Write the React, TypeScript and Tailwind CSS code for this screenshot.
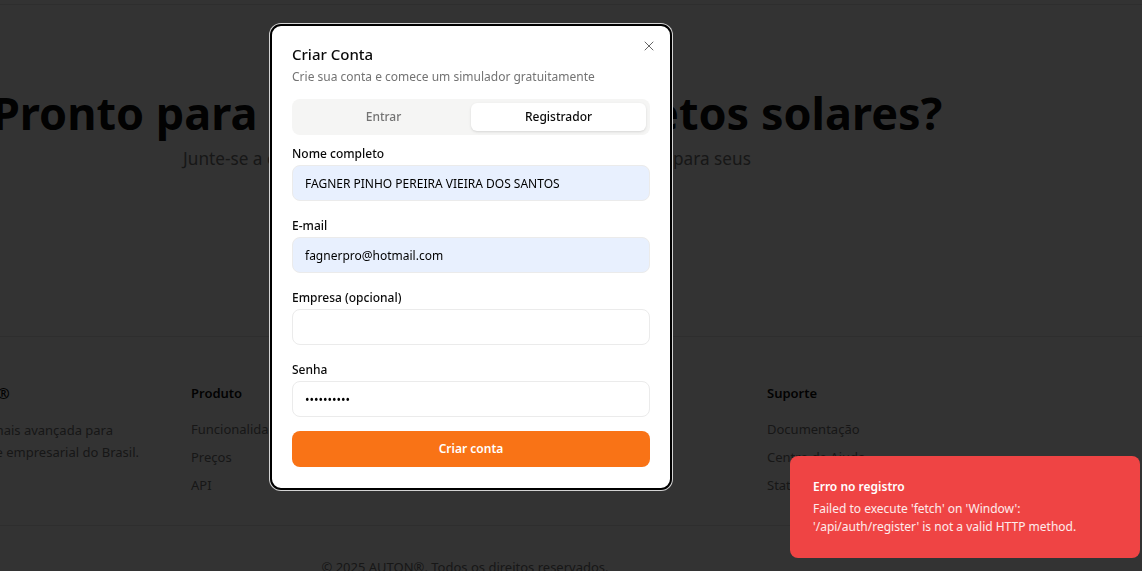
import { X, Sun } from "lucide-react";

const font = { fontFamily: '"Noto Sans", "Open Sans", Arial, sans-serif' };

const footerCols = [
  { title: "Produto", links: ["Funcionalidades", "Preços", "API"] },
  { title: "Empresa", links: ["Sobre", "Blog", "Carreiras"] },
  { title: "Suporte", links: ["Documentação", "Centro de Ajuda", "Status"] },
];

function Field({ label, value, type = "text", filled = false }: { label: string; value: string; type?: string; filled?: boolean }) {
  return (
    <div className="flex flex-col gap-[3px]">
      <label className="text-[12px] leading-4 font-medium text-[#0a0a0a]">{label}</label>
      <input
        type={type}
        defaultValue={value}
        className={`h-9 w-full rounded-lg border border-[#ebebeb] px-3 text-[12px] text-black outline-none ${
          filled ? "bg-[#e8f0fe]" : "bg-white"
        }`}
      />
    </div>
  );
}

export default function App() {
  return (
    <div className="relative min-h-[571px] overflow-hidden bg-white" style={font}>
      {/* page behind the dialog */}
      <div className="h-[5px] border-b border-[#e5e5e5]" />
      <div className="w-[934px]">
        <section className="flex h-[331px] flex-col items-center pt-[81px] text-center">
          <h1 className="whitespace-nowrap text-[45px] leading-[54px] font-bold text-[#0a0a0a]">
            Pronto para realizar seus projetos solares?
          </h1>
          <p className="mt-[7px] whitespace-nowrap text-[17.2px] leading-6 text-[#737373]">
            Junte-se a centenas de integradores que já usam o AUTON® para seus
          </p>
        </section>
      </div>

      <footer className="border-t border-[#e5e5e5]">
        <div className="-ml-[97px] grid h-[188px] w-[1120px] grid-cols-4 gap-8 pt-[46px]">
          <div>
            <div className="flex h-5 items-center gap-2">
              <div className="flex h-8 w-8 items-center justify-center rounded-lg bg-[#f97316] text-white">
                <Sun size={18} />
              </div>
              <h3 className="text-[15px] leading-5 font-bold text-[#0a0a0a]">AUTON®</h3>
            </div>
            <div className="mt-[16px] flex w-[236px] flex-col items-end text-[13px] leading-[22px] text-[#737373]">
              <span className="whitespace-nowrap pr-[26px]">Plataforma solar mais avançada para</span>
              <span className="whitespace-nowrap">o mercado residencial e empresarial do Brasil.</span>
            </div>
          </div>
          {footerCols.map((c) => (
            <div key={c.title}>
              <h3 className="text-[13px] leading-5 font-semibold text-[#0a0a0a]">{c.title}</h3>
              <ul className="mt-[16px] flex flex-col gap-2">
                {c.links.map((l) => (
                  <li key={l} className="text-[13px] leading-5 text-[#737373]">
                    {l}
                  </li>
                ))}
              </ul>
            </div>
          ))}
        </div>
        <div className="w-[930px] border-t border-[#e5e5e5] pt-[31px] text-center text-[13px] leading-5 text-[#737373]">
          © 2025 AUTON®. Todos os direitos reservados.
        </div>
      </footer>

      {/* overlay */}
      <div className="fixed inset-0 bg-black/80" />

      {/* dialog */}
      <div className="fixed left-[270px] top-[24px] w-[402px] rounded-[11px] border-2 border-black bg-white px-5 pt-4 pb-[21px] shadow-[0_0_0_1px_#d4d4d4]">
        <button className="absolute right-[13px] top-[12px] text-[#666]">
          <X size={16} strokeWidth={1.5} />
        </button>
        <h2 className="text-[15px] leading-6 font-medium text-[#0a0a0a]">Criar Conta</h2>
        <p className="mt-px text-[12px] leading-5 text-[#737373]">Crie sua conta e comece um simulador gratuitamente</p>

        <div className="mt-3 grid h-9 grid-cols-2 rounded-lg bg-[#f5f5f4] p-1">
          <button className="rounded-md text-[12px] font-medium text-[#737373]">Entrar</button>
          <button className="rounded-md bg-white text-[12px] font-medium text-[#0a0a0a] shadow-sm">Registrador</button>
        </div>

        <div className="mt-[11px] flex flex-col gap-[17px]">
          <Field label="Nome completo" value="FAGNER PINHO PEREIRA VIEIRA DOS SANTOS" filled />
          <Field label="E-mail" value="fagnerpro@hotmail.com" filled />
          <Field label="Empresa (opcional)" value="" />
          <Field label="Senha" value="fagner1234" type="password" />
        </div>

        <button className="mt-[14px] h-9 w-full rounded-lg bg-[#f97316] text-[12px] font-semibold text-white">
          Criar conta
        </button>
      </div>

      {/* toast */}
      <div className="fixed right-[2px] top-[456px] w-[350px] rounded-lg bg-[#ef4444] px-[23px] pt-[22px] pb-[22px] text-white">
        <div className="text-[12px] leading-[18px] font-semibold">Erro no registro</div>
        <div className="mt-[4px] text-[12px] leading-[18px] text-white/90">
          Failed to execute 'fetch' on 'Window': '/api/auth/register' is not a valid HTTP method.
        </div>
      </div>
    </div>
  );
}
